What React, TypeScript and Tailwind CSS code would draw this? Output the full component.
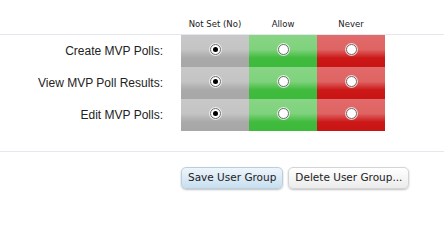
import React from "react";

const rows = ["Create MVP Polls:", "View MVP Poll Results:", "Edit MVP Polls:"];

const cellStyles = [
  "bg-[linear-gradient(to_bottom,#c8c8c8_0%,#c4c4c4_45%,#a9a9a9_72%,#a7a7a7_100%)]",
  "bg-[linear-gradient(to_bottom,#88d585_0%,#80d27d_45%,#40bb3e_72%,#3db93c_100%)]",
  "bg-[linear-gradient(to_bottom,#e26a6a_0%,#df6464_45%,#cc1818_72%,#c91414_100%)]",
];

const Radio = ({ checked }: { checked?: boolean }) => (
  <span className="flex h-[11px] w-[11px] items-center justify-center rounded-full border border-[#6b6b6b] bg-white shadow-[0_0_0_1px_rgba(255,255,255,0.7)]">
    {checked && <span className="h-[5px] w-[5px] rounded-full bg-black" />}
  </span>
);

const App = () => {
  return (
    <div className="h-[202px] w-[444px] bg-white font-['Liberation_Sans',Arial,sans-serif] text-[#222]">
      <div className="flex h-[34px] items-end pb-[6px] font-['DejaVu_Sans',Verdana,sans-serif] text-[8.5px] leading-none text-[#222]">
        <div className="w-[181px]" />
        <div className="w-[68px] text-center">Not Set (No)</div>
        <div className="w-[68px] text-center">Allow</div>
        <div className="w-[68px] text-center">Never</div>
      </div>
      <div className="border-t border-[#e2e8ee]">
        {rows.map((label) => (
          <div key={label} className="flex h-[32px]">
            <div className="flex w-[181px] items-center justify-end pr-[18px] text-[12px] leading-none">
              {label}
            </div>
            {cellStyles.map((bg, i) => (
              <div key={i} className={`flex w-[68px] justify-center pt-[9px] ${bg}`}>
                <Radio checked={i === 0} />
              </div>
            ))}
          </div>
        ))}
      </div>
      <div className="mt-[20px] border-t border-[#e2e8ee]" />
      <div className="flex gap-[5px] pl-[181px] pt-[15px] font-['DejaVu_Sans',Verdana,sans-serif] text-[10.5px]">
        <button className="h-[22px] rounded-[5px] border border-[#b9cfdf] bg-[linear-gradient(to_bottom,#eef5fb,#c7dff0)] px-[6px] text-[#222] shadow-[0_1px_2px_rgba(0,0,0,0.25)]">
          Save User Group
        </button>
        <button className="h-[22px] rounded-[5px] border border-[#d4d4d4] bg-[linear-gradient(to_bottom,#ffffff,#ececec)] px-[6px] text-[#222] shadow-[0_1px_2px_rgba(0,0,0,0.25)]">
          Delete User Group...
        </button>
      </div>
    </div>
  );
};

export default App;
